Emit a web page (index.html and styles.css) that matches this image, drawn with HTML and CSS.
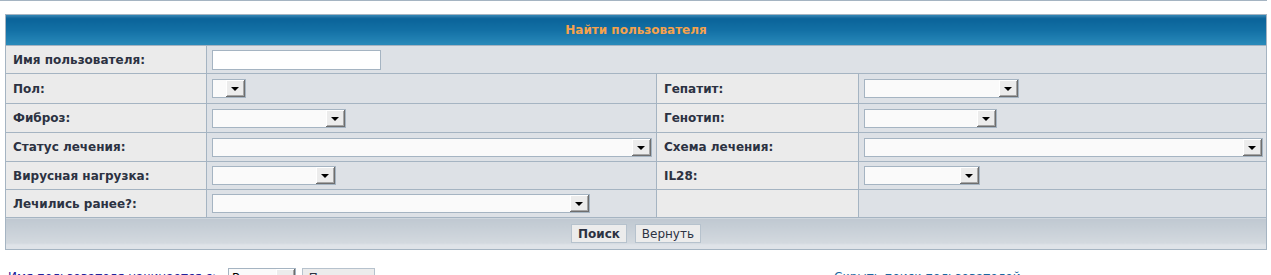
FILE: index.html
```html
<!DOCTYPE html>
<html lang="ru">
<head>
    <meta charset="UTF-8">
    <title>Найти пользователя</title>
    <link rel="stylesheet" href="styles.css">
</head>
<body>
    <div class="topline"></div>

    <form class="search-form" action="#">
        <table class="tborder">
            <colgroup>
                <col class="c-label">
                <col class="c-value">
                <col class="c-label2">
                <col>
            </colgroup>
            <thead>
                <tr><td colspan="4" class="thead">Найти пользователя</td></tr>
            </thead>
            <tbody>
                <tr>
                    <td class="label">Имя пользователя:</td>
                    <td class="value" colspan="3"><input type="text" class="text-input"></td>
                </tr>
                <tr>
                    <td class="label">Пол:</td>
                    <td class="value"><span class="sel sel-pol"><span class="arrow"></span></span></td>
                    <td class="label">Гепатит:</td>
                    <td class="value"><span class="sel sel-hep"><span class="arrow"></span></span></td>
                </tr>
                <tr>
                    <td class="label">Фиброз:</td>
                    <td class="value"><span class="sel sel-fib"><span class="arrow"></span></span></td>
                    <td class="label">Генотип:</td>
                    <td class="value"><span class="sel sel-gen"><span class="arrow"></span></span></td>
                </tr>
                <tr>
                    <td class="label">Статус лечения:</td>
                    <td class="value"><span class="sel sel-status"><span class="arrow"></span></span></td>
                    <td class="label">Схема лечения:</td>
                    <td class="value"><span class="sel sel-scheme"><span class="arrow"></span></span></td>
                </tr>
                <tr>
                    <td class="label">Вирусная нагрузка:</td>
                    <td class="value"><span class="sel sel-virus"><span class="arrow"></span></span></td>
                    <td class="label">IL28:</td>
                    <td class="value"><span class="sel sel-il"><span class="arrow"></span></span></td>
                </tr>
                <tr>
                    <td class="label">Лечились ранее?:</td>
                    <td class="value"><span class="sel sel-prev"><span class="arrow"></span></span></td>
                    <td class="label"></td>
                    <td class="value"></td>
                </tr>
            </tbody>
            <tfoot>
                <tr>
                    <td colspan="4" class="tfoot">
                        <button type="submit" class="btn btn-main">Поиск</button>
                        <button type="reset" class="btn">Вернуть</button>
                    </td>
                </tr>
            </tfoot>
        </table>
    </form>

    <div class="bottom">
        <div class="letter">
            Имя пользователя начинается с:
            <span class="sel sel-all">Все<span class="arrow"></span></span>
            <button type="button" class="btn">Показать</button>
        </div>
        <a href="#" class="toggle">Скрыть поиск пользователей</a>
    </div>
</body>
</html>
```

FILE: styles.css
```css
body {
    margin: 0;
    background: #ffffff;
    color: #000000;
    font-family: "DejaVu Sans", Verdana, sans-serif;
    font-size: 12px;
}

.topline {
    width: 1267px;
    height: 1px;
    background: #a5b4c2;
}

.search-form {
    margin: 13px 0 0 5px;
}

.tborder {
    width: 1262px;
    table-layout: fixed;
    border-collapse: collapse;
    border: 1px solid #a5b4c2;
}

.c-label {
    width: 201px;
}

.c-value {
    width: 450px;
}

.c-label2 {
    width: 202px;
}

.tborder td {
    border: 1px solid #a5b4c2;
    height: 28px;
    box-sizing: border-box;
    vertical-align: middle;
    padding: 0;
}

.tborder tbody tr:nth-child(2) td {
    height: 30px;
}

.tborder tbody tr:nth-child(3) td,
.tborder tbody tr:nth-child(4) td {
    height: 29px;
}

.thead {
    background: linear-gradient(#3a82b0 0, #0a6399 3px, #1370a5 50%, #2a8bbb 100%);
    color: #f6a24c;
    font-weight: bold;
    text-align: center;
}

.tborder .thead {
    height: 31px;
}

.label {
    background: #ebebeb;
    color: #2c3242;
    font-weight: bold;
    padding-left: 7px !important;
}

.value {
    background: #dde1e6;
    padding-left: 5px !important;
}

.text-input {
    display: block;
    width: 169px;
    height: 20px;
    box-sizing: border-box;
    margin: 0;
    border: 1px solid #a5b4c2;
    background: #ffffff;
    font: inherit;
}

.sel {
    display: inline-flex;
    justify-content: flex-end;
    height: 19px;
    box-sizing: border-box;
    border: 1px solid #a5b4c2;
    background: #fafafa;
    vertical-align: middle;
}

.arrow {
    position: relative;
    width: 19px;
    height: 17px;
    box-sizing: border-box;
    background: #ececec;
    box-shadow: inset -1px -1px #6e6e6e, inset 1px 1px #ffffff, inset -2px -2px #a6a6a6;
}

.arrow::after {
    content: "";
    position: absolute;
    left: 5px;
    top: 7px;
    border-style: solid;
    border-width: 4px 4px 0 4px;
    border-color: #000000 transparent transparent transparent;
}

.sel-pol { width: 34px; }
.sel-fib { width: 134px; }
.sel-status { width: 440px; }
.sel-virus { width: 124px; }
.sel-prev { width: 378px; }
.sel-hep { width: 155px; }
.sel-gen { width: 133px; }
.sel-scheme { width: 399px; }
.sel-il { width: 116px; }

.tfoot {
    background: linear-gradient(#bfc8d1 0, #d3d9df 80%, #dfe3e8 85%, #dfe3e8 100%);
    text-align: center;
}

.tborder .tfoot {
    height: 32px;
}

.btn {
    height: 19px;
    margin: 0 2px;
    padding: 0 6px;
    border: 1px solid #b6c2cd;
    background: #ececec;
    color: #2c3242;
    font: inherit;
    vertical-align: middle;
}

.btn-main {
    font-weight: bold;
}

.bottom {
    display: grid;
    grid-template-columns: 826px 1fr;
    margin-top: 18px;
    padding-left: 8px;
    line-height: 19px;
}

.letter {
    color: #22229c;
}

.letter .sel {
    margin-left: 8px;
}

.sel-all {
    width: 68px;
    justify-content: space-between;
    padding-left: 3px;
    color: #000000;
}

.toggle {
    color: #1a66a0;
    text-decoration: none;
}
```
